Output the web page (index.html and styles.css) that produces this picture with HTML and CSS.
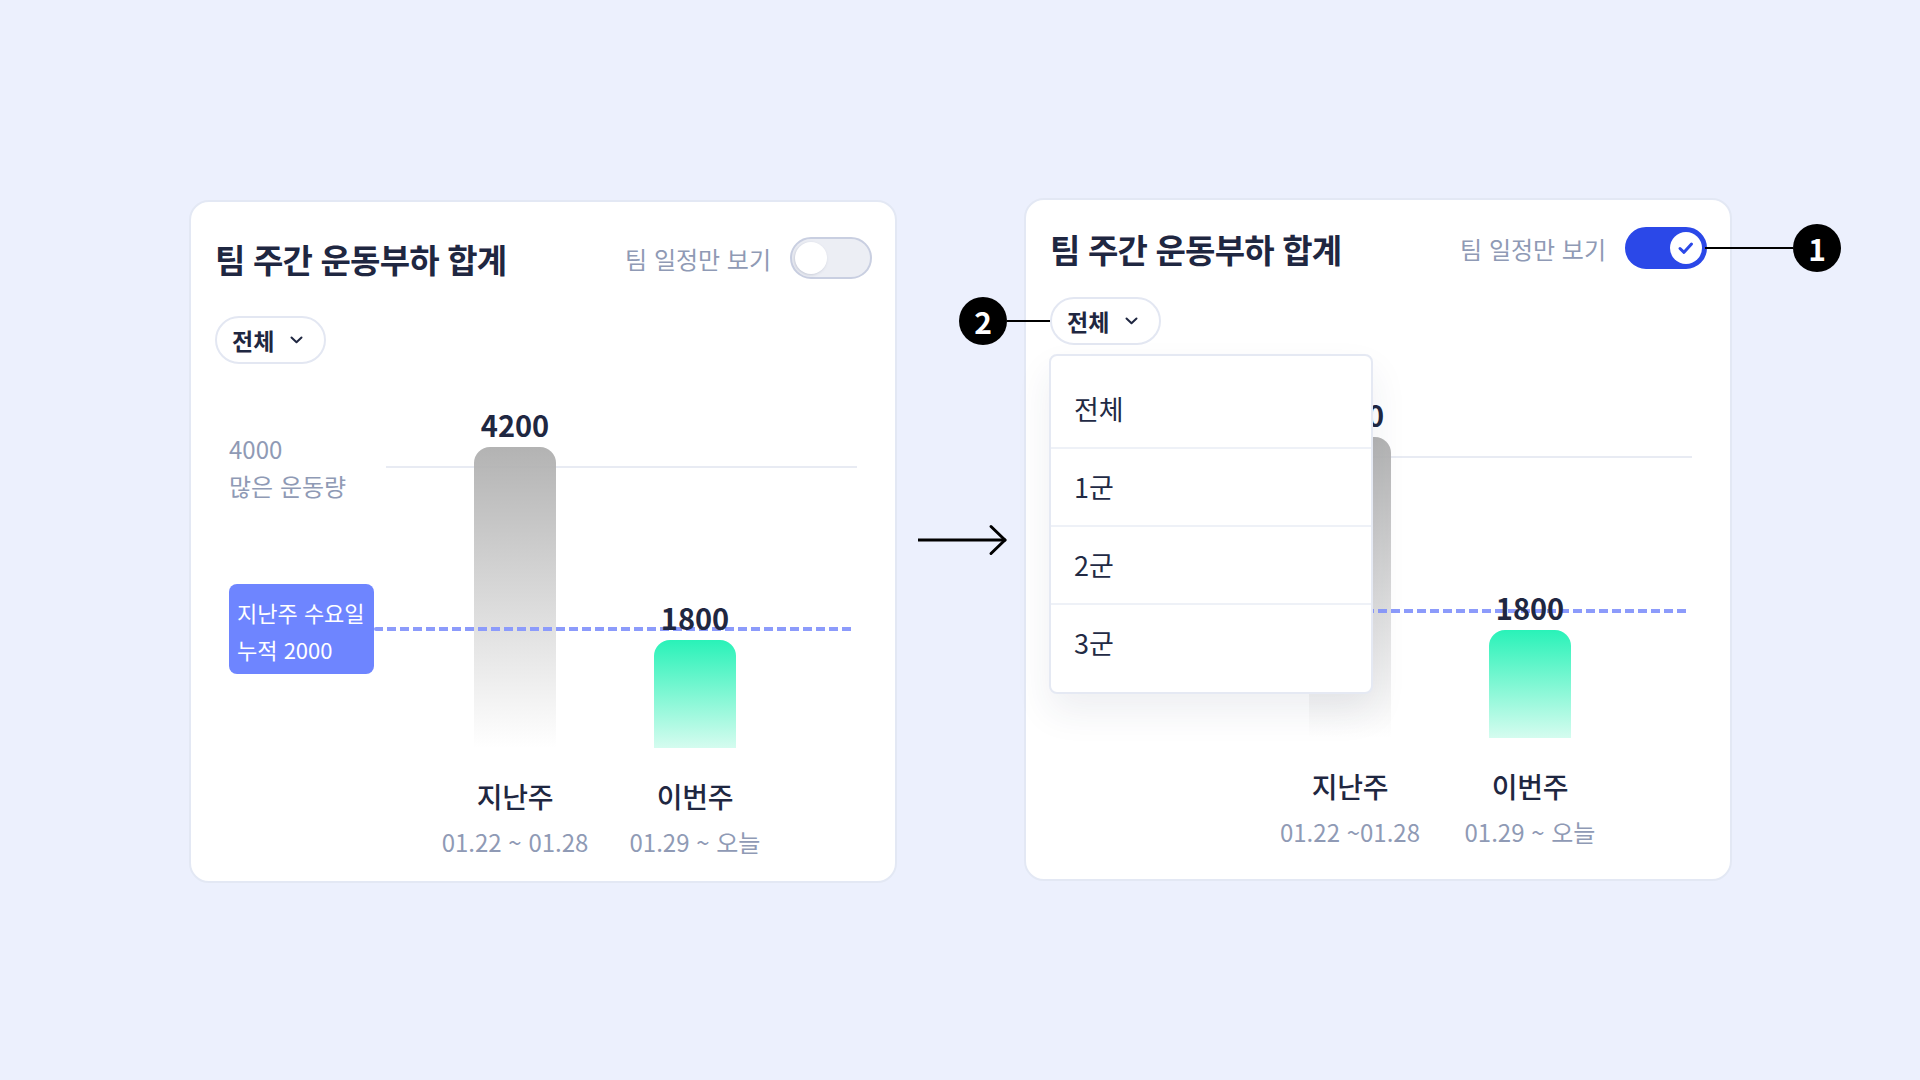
FILE: index.html
```html
<!DOCTYPE html>
<html lang="ko">
<head>
    <meta charset="UTF-8">
    <meta name="viewport" content="width=device-width, initial-scale=1.0">
    <title>팀 주간 운동부하 합계 - 필터</title>
    <link rel="stylesheet" href="styles.css">
</head>
<body>

    <div class="stage">

        <!-- 기본 상태 -->
        <section class="card">
            <header class="card-head">
                <h2 class="card-title">팀 주간 운동부하 합계</h2>
                <div class="switch-group">
                    <span class="switch-label">팀 일정만 보기</span>
                    <span class="switch"><span class="knob"></span></span>
                </div>
            </header>

            <div class="select">
                <div class="chip">
                    <span>전체</span>
                    <svg class="chev" width="13" height="8" viewBox="0 0 13 8"><path d="M1.5 1.5 L6.5 6.3 L11.5 1.5"/></svg>
                </div>
            </div>

            <div class="chart">
                <div class="grid-line"></div>
                <div class="axis-label">4000<br>많은 운동량</div>
                <div class="plot">
                    <div class="col">
                        <span class="value">4200</span>
                        <div class="bar bar-last" style="height: 301px"></div>
                    </div>
                    <div class="col">
                        <span class="value">1800</span>
                        <div class="bar bar-this" style="height: 108px"></div>
                    </div>
                </div>
                <div class="target-line"></div>
                <div class="target-tip">지난주 수요일<br>누적 2000</div>
                <div class="x-labels">
                    <div class="x-label">
                        <div class="week">지난주</div>
                        <div class="range">01.22 ~ 01.28</div>
                    </div>
                    <div class="x-label">
                        <div class="week">이번주</div>
                        <div class="range">01.29 ~ 오늘</div>
                    </div>
                </div>
            </div>
        </section>

        <svg class="flow-arrow" width="91" height="32" viewBox="0 0 91 32">
            <path d="M0 16 H87"/>
            <path d="M73 2.5 L87 16 L73 29.5"/>
        </svg>

        <!-- 토글 켬 + 드롭다운 열림 -->
        <section class="card card-open">
            <header class="card-head">
                <h2 class="card-title">팀 주간 운동부하 합계</h2>
                <div class="switch-group">
                    <span class="switch-label">팀 일정만 보기</span>
                    <span class="switch is-on">
                        <span class="knob">
                            <svg width="32" height="32" viewBox="0 0 32 32"><path d="M10 16.5 L14 20.3 L21.5 12"/></svg>
                        </span>
                        <span class="callout callout-right">
                            <span class="callout-line"></span>
                            <span class="badge">1</span>
                        </span>
                    </span>
                </div>
            </header>

            <div class="select">
                <div class="chip">
                    <span>전체</span>
                    <svg class="chev" width="13" height="8" viewBox="0 0 13 8"><path d="M1.5 1.5 L6.5 6.3 L11.5 1.5"/></svg>
                </div>
                <span class="callout callout-left">
                    <span class="badge">2</span>
                    <span class="callout-line short"></span>
                </span>
                <ul class="menu">
                    <li>전체</li>
                    <li>1군</li>
                    <li>2군</li>
                    <li>3군</li>
                </ul>
            </div>

            <div class="chart">
                <div class="grid-line"></div>
                <div class="axis-label">4000<br>많은 운동량</div>
                <div class="plot">
                    <div class="col">
                        <span class="value">4200</span>
                        <div class="bar bar-last" style="height: 301px"></div>
                    </div>
                    <div class="col">
                        <span class="value">1800</span>
                        <div class="bar bar-this" style="height: 108px"></div>
                    </div>
                </div>
                <div class="target-line"></div>
                <div class="target-tip">지난주 수요일<br>누적 2000</div>
                <div class="x-labels">
                    <div class="x-label">
                        <div class="week">지난주</div>
                        <div class="range">01.22 ~01.28</div>
                    </div>
                    <div class="x-label">
                        <div class="week">이번주</div>
                        <div class="range">01.29 ~ 오늘</div>
                    </div>
                </div>
            </div>
        </section>

    </div>

</body>
</html>
```

FILE: styles.css
```css
body {
    margin: 0;
    background-color: #ECF0FD;
    font-family: "Noto Sans CJK KR", "Noto Sans", sans-serif;
    color: #1F2741;
}

.stage {
    display: flex;
    align-items: center;
    padding: 198px 0 0 189px;
}

/* 카드 */
.card {
    width: 708px;
    height: 683px;
    box-sizing: border-box;
    padding: 38px 23px 0 24px;
    background-color: #fff;
    border: 2px solid #E3E8F4;
    border-radius: 20px;
}

.card-open {
    padding-top: 30px;
    margin-bottom: 4px;
}

.card-head {
    display: flex;
    justify-content: space-between;
    align-items: center;
    height: 42px;
}

.card-title {
    margin: -4px 0 0;
    font-size: 33px;
    font-weight: 700;
    line-height: 42px;
    letter-spacing: -0.8px;
}

.switch-group {
    display: flex;
    align-items: center;
    gap: 19px;
    margin-top: -6px;
}

.switch-label {
    font-size: 24px;
    color: #8F9AB5;
}

.switch {
    position: relative;
    display: flex;
    align-items: center;
    width: 82px;
    height: 42px;
    box-sizing: border-box;
    padding: 0 3px;
    border: 2px solid #C9CFE1;
    border-radius: 21px;
    background-color: #ECEEF4;
}

.knob {
    width: 32px;
    height: 32px;
    border-radius: 50%;
    background-color: #fff;
    box-shadow: -1px 1px 3px rgba(90, 100, 130, 0.25);
}

.switch.is-on {
    justify-content: flex-end;
    border-color: #2B48E8;
    background-color: #2B48E8;
}

.switch.is-on .knob {
    box-shadow: none;
}

.knob svg {
    display: block;
    fill: none;
    stroke: #2B48E8;
    stroke-width: 3;
    stroke-linecap: round;
    stroke-linejoin: round;
}

/* 필터 */
.select {
    position: relative;
    display: flex;
    width: fit-content;
    margin-top: 34px;
}

.card-open .select {
    margin-top: 25px;
}

.chip {
    display: flex;
    align-items: center;
    gap: 16px;
    height: 48px;
    box-sizing: border-box;
    padding: 0 21px 0 15px;
    border: 2px solid #E3E7F2;
    border-radius: 24px;
    background-color: #fff;
    font-size: 23px;
    font-weight: 700;
}

.chev path {
    fill: none;
    stroke: #1F2741;
    stroke-width: 2;
    stroke-linecap: round;
    stroke-linejoin: round;
}

.menu {
    position: absolute;
    top: calc(100% + 9px);
    left: -1px;
    z-index: 10;
    width: 324px;
    box-sizing: border-box;
    margin: 0;
    padding: 15px 0 11px;
    list-style: none;
    background-color: #fff;
    border: 2px solid #E5E9F3;
    border-radius: 8px;
    box-shadow: 0 18px 36px rgba(40, 50, 90, 0.08);
}

.menu li {
    height: 76px;
    padding-left: 23px;
    font-size: 27px;
    line-height: 76px;
    color: #222A44;
    border-bottom: 2px solid #EEF1F7;
}

.menu li:last-child {
    border-bottom: none;
}

/* 설명 번호 */
.callout {
    position: absolute;
    top: 50%;
    z-index: 11;
    display: flex;
    align-items: center;
    transform: translateY(-50%);
}

.callout-right {
    left: 100%;
}

.callout-left {
    right: 100%;
}

.callout-line {
    width: 88px;
    height: 2px;
    background-color: #000;
}

.callout-line.short {
    width: 43px;
}

.badge {
    width: 48px;
    height: 48px;
    border-radius: 50%;
    background-color: #000;
    color: #fff;
    font-size: 30px;
    font-weight: 700;
    line-height: 48px;
    text-align: center;
}

/* 차트 */
.chart {
    position: relative;
}

.card-open .chart {
    margin-top: 9px;
}

.grid-line {
    position: absolute;
    top: 102px;
    left: 171px;
    width: 471px;
    height: 2px;
    background-color: #E8EBF3;
}

.axis-label {
    position: absolute;
    top: 66px;
    left: 14px;
    font-size: 24px;
    line-height: 37px;
    color: #8F9AB5;
}

.plot {
    position: relative;
    display: flex;
    align-items: flex-end;
    height: 384px;
    padding-left: 210px;
}

.col {
    display: flex;
    flex-direction: column;
    align-items: center;
    width: 180px;
}

.value {
    position: relative;
    z-index: 2;
    margin-bottom: 5px;
    font-size: 29px;
    font-weight: 700;
    line-height: 36px;
}

.bar {
    width: 82px;
    border-radius: 16px 16px 0 0;
}

.bar-last {
    background: linear-gradient(180deg, #B3B3B3 0%, rgba(255, 255, 255, 0) 100%);
}

.bar-this {
    background: linear-gradient(180deg, #29F2B8 0%, #D5FCEF 100%);
}

.target-line {
    position: absolute;
    top: 263px;
    left: 159px;
    width: 480px;
    height: 4px;
    border-radius: 2px;
    background: repeating-linear-gradient(90deg, #8C9BFB 0 9px, transparent 9px 13px);
}

.card-open .target-line {
    top: 255px;
}

.target-tip {
    position: absolute;
    top: 220px;
    left: 14px;
    width: 145px;
    height: 90px;
    box-sizing: border-box;
    padding: 10px 0 0 8px;
    border-radius: 8px;
    background-color: #6E85FF;
    color: #fff;
    font-size: 22px;
    line-height: 37px;
    white-space: nowrap;
}

.x-labels {
    display: flex;
    padding-left: 210px;
}

.x-label {
    width: 180px;
    text-align: center;
}

.week {
    margin-top: 31px;
    font-size: 28px;
    font-weight: 500;
    line-height: 34px;
    letter-spacing: -0.3px;
}

.range {
    margin-top: 12px;
    font-size: 24px;
    line-height: 34px;
    color: #8F9AB5;
    white-space: nowrap;
}

.flow-arrow {
    flex-shrink: 0;
    margin: 0 15px 3px 21px;
}

.flow-arrow path {
    fill: none;
    stroke: #000;
    stroke-width: 3;
    stroke-linecap: round;
    stroke-linejoin: round;
}
```
